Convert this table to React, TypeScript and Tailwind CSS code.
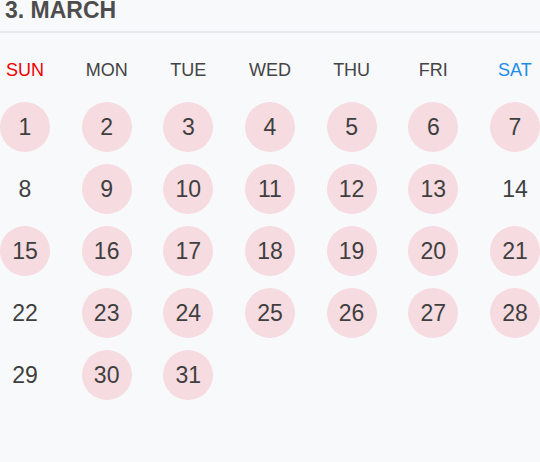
const days = [
  { label: 'SUN', color: 'text-[#f00000]' },
  { label: 'MON', color: 'text-[#444444]' },
  { label: 'TUE', color: 'text-[#444444]' },
  { label: 'WED', color: 'text-[#444444]' },
  { label: 'THU', color: 'text-[#444444]' },
  { label: 'FRI', color: 'text-[#444444]' },
  { label: 'SAT', color: 'text-[#1a8cec]' },
];

// days without a mark
const plain = [8, 14, 22, 29];

const App = () => {
  const dates = Array.from({ length: 31 }, (_, i) => i + 1);

  return (
    <div
      className="w-[540px] h-[462px] bg-[#f8f9fb] overflow-hidden"
      style={{ fontFamily: '"Liberation Sans", Arial, sans-serif' }}
    >
      {/* Title */}
      <div className="h-[33px] px-[5px] border-b-2 border-[#e6e7ea] flex items-start">
        <h1 className="text-[23px] leading-[21px] font-bold text-[#4d4d4d]">3. MARCH</h1>
      </div>

      {/* Weekday labels */}
      <div className="grid grid-cols-[repeat(7,50px)] justify-between mt-[27px]">
        {days.map((d) => (
          <div key={d.label} className={`text-center text-[18px] leading-[21px] ${d.color}`}>
            {d.label}
          </div>
        ))}
      </div>

      {/* Dates */}
      <div className="grid grid-cols-[repeat(7,50px)] justify-between gap-y-[12px] mt-[21px]">
        {dates.map((n) => (
          <div
            key={n}
            className={`w-[50px] h-[50px] rounded-full flex items-center justify-center text-[23px] text-[#3f3f3f] ${
              plain.includes(n) ? '' : 'bg-[#f6dbe0]'
            }`}
          >
            {n}
          </div>
        ))}
      </div>
    </div>
  );
};

export default App;
